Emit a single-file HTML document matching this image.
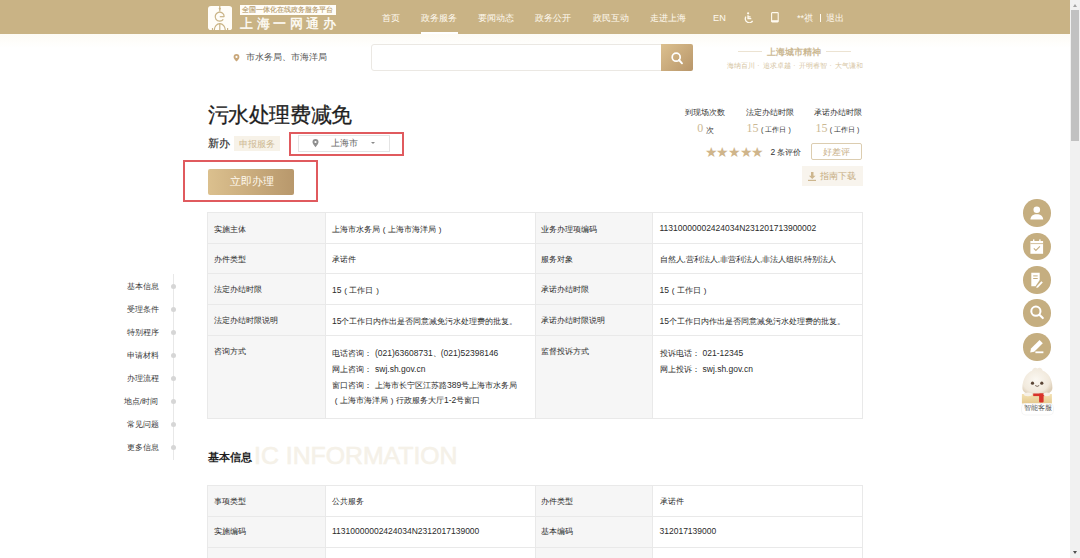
<!DOCTYPE html>
<html><head><meta charset="utf-8">
<style>
*{margin:0;padding:0;box-sizing:border-box}
html,body{width:1080px;height:558px;overflow:hidden;background:#fff}
body{font-family:"Liberation Sans",sans-serif;position:relative;color:#333}
.a{position:absolute;white-space:nowrap;line-height:1}
.r{position:absolute}
i{font-style:normal}
#hdr{position:absolute;left:0;top:0;width:1070px;height:34px;background:#c9b385}
#hsh{position:absolute;left:0;top:34px;width:1070px;height:14px;background:linear-gradient(#fdfbf5,#fff)}
.nav{color:#fffaf0;font-size:9.2px}
.t8{font-size:8px;color:#2b2b2b}
.n{font-size:8.5px}
.sp{display:inline-block;width:3px}
.fp{display:inline-block;width:8px;text-align:center;font-size:8px}
.hl{position:absolute;height:1px;background:#e9e9e9}
.vl{position:absolute;width:1px;background:#e9e9e9}
.lb{position:absolute;background:#f6f6f6}
.slg{top:62.6px;font-size:6.6px;color:#d6c5a3}
.snav{font-size:8px;color:#383838;margin-top:-0.6px}
.dot{position:absolute;left:171.2px;width:5px;height:5px;border-radius:50%;background:#d6d6d6}
.circ{position:absolute;left:1023.3px;width:27.6px;height:27.6px;border-radius:50%;background:#c5ae80}
.circ svg{position:absolute;left:0;top:0}
</style></head><body>
<div id="hdr"></div><div id="hsh"></div>
<!-- logo -->
<svg class="a" style="left:207.8px;top:5.7px" width="24.2" height="24.2" viewBox="0 0 24.2 24.2">
<rect x="0" y="0" width="24.2" height="24.2" rx="3" fill="#fffdf8"/>
<g stroke="#c9b385" stroke-width="1.2" fill="none">
<line x1="11.8" y1="0" x2="11.8" y2="5.5"/>
<path d="M16.2 10.7 A4.5 4.5 0 1 0 15.3 13.4"/>
<line x1="11.8" y1="10.7" x2="16.2" y2="10.7"/>
<path d="M6.3 24.2 A5.5 6.5 0 0 1 17.3 24.2"/>
<line x1="11.8" y1="17.5" x2="11.8" y2="24.2"/>
<line x1="4.5" y1="22" x2="4.5" y2="24.2"/>
<line x1="19.6" y1="22" x2="19.6" y2="24.2"/>
</g>
<path d="M11.8 1.3 L13.1 2.7 L11.8 4.1 L10.5 2.7Z" fill="#c9b385"/>
</svg>
<div class="r" style="left:240px;top:5px;width:96px;height:10px;background:#fffdf8"></div>
<div class="a" style="left:242px;top:5.8px;font-size:7.2px;color:#b89e70;-webkit-text-stroke:0.15px #b89e70">全国一体化在线政务服务平台</div>
<div class="a" style="left:240px;top:16.6px;font-size:13.4px;color:#fffdf8;letter-spacing:3.6px;-webkit-text-stroke:0.35px #fffdf8">上海一网通办</div>
<!-- nav -->
<div class="a nav" style="left:382px;top:13.5px">首页</div>
<div class="a nav" style="left:421px;top:13.5px">政务服务</div>
<div class="r" style="left:421px;top:32px;width:37px;height:2px;background:#fff"></div>
<div class="a nav" style="left:478px;top:13.5px">要闻动态</div>
<div class="a nav" style="left:535px;top:13.5px">政务公开</div>
<div class="a nav" style="left:592.5px;top:13.5px">政民互动</div>
<div class="a nav" style="left:650px;top:13.5px">走进上海</div>
<div class="a nav" style="left:713px;top:13.8px">EN</div>
<svg class="a" style="left:743px;top:12px" width="11" height="11" viewBox="0 0 11 11">
<g fill="none" stroke="#fffaf0" stroke-width="1.3"><circle cx="5.1" cy="1.3" r="1.1" fill="#fffaf0" stroke="none"/>
<path d="M2.9 4.6 A3.9 3.9 0 1 0 9.6 8.8"/><path d="M5 3.2 V6.6 H8.3"/><path d="M5 4.9 H7.6"/></g></svg>
<svg class="a" style="left:770.8px;top:12px" width="8" height="10.5" viewBox="0 0 8 10.5">
<rect x="0.6" y="0.6" width="6.6" height="9.3" rx="0.6" fill="none" stroke="#fffaf0" stroke-width="1.1"/>
<rect x="0.6" y="8.2" width="6.6" height="1.8" fill="#fffaf0"/></svg>
<div class="a nav" style="left:797px;top:13.5px">**祺</div>
<div class="r" style="left:820px;top:14px;width:1px;height:8px;background:#fffaf0"></div>
<div class="a nav" style="left:826px;top:13.5px">退出</div>

<!-- search row -->
<svg class="a" style="left:233px;top:53.8px" width="7" height="8" viewBox="0 0 7 8">
<path d="M3.5 7.6 C1.5 5.3 0.6 4 0.6 2.9 A2.9 2.9 0 0 1 6.4 2.9 C6.4 4 5.5 5.3 3.5 7.6Z" fill="#c9a77a"/>
<circle cx="3.5" cy="2.9" r="1.1" fill="#fff"/></svg>
<div class="a" style="left:246px;top:53px;font-size:9.2px;color:#555">市水务局、市海洋局</div>
<div class="r" style="left:371px;top:44px;width:291px;height:27.3px;border:1px solid #ebe8e3;border-radius:3px 0 0 3px;background:#fff"></div>
<div class="r" style="left:661px;top:44px;width:32px;height:27.3px;border-radius:0 2px 2px 0;background:linear-gradient(135deg,#dcc08f,#b8966a)"></div>
<svg class="a" style="left:670px;top:51px" width="14" height="14" viewBox="0 0 14 14">
<circle cx="6.2" cy="6.2" r="4" fill="none" stroke="#fff" stroke-width="1.7"/>
<line x1="9" y1="9" x2="12" y2="12.3" stroke="#fff" stroke-width="1.9" stroke-linecap="round"/></svg>
<div class="r" style="left:738px;top:51px;width:24px;height:1px;background:#ece3d2"></div>
<div class="r" style="left:826px;top:51px;width:25px;height:1px;background:#ece3d2"></div>
<div class="a" style="left:767px;top:48px;font-size:9px;color:#cbb893;font-weight:bold">上海城市精神</div>
<div class="a slg" style="left:726.7px">海纳百川</div><div class="a slg" style="left:757.2px">·</div>
<div class="a slg" style="left:763px">追求卓越</div><div class="a slg" style="left:793.3px">·</div>
<div class="a slg" style="left:799.2px">开明睿智</div><div class="a slg" style="left:829.4px">·</div>
<div class="a slg" style="left:835.3px">大气谦和</div>

<!-- title -->
<div class="a" style="left:207.7px;top:104.7px;font-size:20.6px;letter-spacing:-0.4px;-webkit-text-stroke:0.3px #1e1e1e;color:#1e1e1e">污水处理费减免</div>
<div class="a" style="left:207.7px;top:138.4px;font-size:11.4px;color:#2a2a2a;-webkit-text-stroke:0.15px #2a2a2a">新办</div>
<div class="r" style="left:233.5px;top:135.7px;width:46px;height:15.3px;background:#f7f2e8"></div>
<div class="a" style="left:238.7px;top:139.6px;font-size:9px;color:#cdb892">申报服务</div>
<div class="r" style="left:288.5px;top:131.7px;width:115px;height:24.5px;border:2px solid #e05a5e"></div>
<div class="r" style="left:297.5px;top:135.3px;width:92px;height:16.7px;border:1px solid #e4e4e4"></div>
<svg class="a" style="left:312px;top:139.4px" width="7" height="8.5" viewBox="0 0 7 8.5">
<path d="M3.5 8.3 C1.5 5.8 0.5 4.3 0.5 3 A3 3 0 0 1 6.5 3 C6.5 4.3 5.5 5.8 3.5 8.3Z" fill="#8f8f8f"/>
<circle cx="3.5" cy="3" r="1.1" fill="#fff"/></svg>
<div class="a" style="left:331.4px;top:139.4px;font-size:9px;color:#666">上海市</div>
<div class="r" style="left:370.8px;top:142.3px;width:0;height:0;border-left:2.6px solid transparent;border-right:2.6px solid transparent;border-top:2.8px solid #8a8a8a"></div>

<div class="r" style="left:183px;top:160.4px;width:135px;height:41.5px;border:2px solid #e05a5e"></div>
<div class="r" style="left:208px;top:168.5px;width:86.3px;height:26.2px;border-radius:2px;background:linear-gradient(90deg,#dbc08e,#b8986c)"></div>
<div class="a" style="left:230px;top:176.2px;font-size:10.8px;color:#fffaf0">立即办理</div>

<!-- stats -->
<div class="a t8" style="left:685.2px;top:109px;color:#333">到现场次数</div>
<div class="a t8" style="left:745.8px;top:109px;color:#333">法定办结时限</div>
<div class="a t8" style="left:814.3px;top:109px;color:#333">承诺办结时限</div>
<div class="a" style="left:697.2px;top:122.2px;font-size:12px;color:#ccb994;font-family:'Liberation Serif',serif">0</div>
<div class="a" style="left:705.5px;top:127.2px;font-size:7.5px;color:#333">次</div>
<div class="a" style="left:746.5px;top:122.2px;font-size:12px;color:#ccb994;font-family:'Liberation Serif',serif">15</div>
<div class="a" style="left:761px;top:126.4px;font-size:7px;color:#333">(</div>
<div class="a" style="left:765.2px;top:126px;font-size:7.4px;color:#333">工作日</div>
<div class="a" style="left:788.5px;top:126.4px;font-size:7px;color:#333">)</div>
<div class="a" style="left:815.5px;top:122.2px;font-size:12px;color:#ccb994;font-family:'Liberation Serif',serif">15</div>
<div class="a" style="left:829.8px;top:126.4px;font-size:7px;color:#333">(</div>
<div class="a" style="left:833.8px;top:126px;font-size:7.4px;color:#333">工作日</div>
<div class="a" style="left:857px;top:126.4px;font-size:7px;color:#333">)</div>
<div class="a" style="left:704.8px;top:145.8px;font-size:13.8px;color:#cfb58b;letter-spacing:-1.4px">★★★★★</div>
<div class="a t8" style="left:770.5px;top:147.5px;color:#333"><i class="n">2</i> 条评价</div>
<div class="r" style="left:811.4px;top:143.2px;width:51px;height:17px;border:1px solid #dccdb0;border-radius:2px"></div>
<div class="a" style="left:822.8px;top:147.8px;font-size:9.3px;color:#c8b089">好差评</div>
<div class="r" style="left:801.5px;top:166.2px;width:61.5px;height:20px;background:#f8f4ed"></div>
<svg class="a" style="left:807.8px;top:172px" width="8.5" height="9" viewBox="0 0 8.5 9">
<path d="M3 0 H5.5 V3.8 H7.6 L4.25 7 L0.9 3.8 H3Z" fill="#cdb68e"/><rect x="0" y="7.8" width="8.5" height="1.2" fill="#cdb68e"/></svg>
<div class="a" style="left:820.4px;top:171.8px;font-size:9.1px;color:#c6ad82">指南下载</div>

<!-- table 1 -->
<div class="lb" style="left:207px;top:212px;width:118px;height:206px"></div>
<div class="lb" style="left:535px;top:212px;width:117px;height:206px"></div>
<div class="hl" style="left:207px;top:212px;width:656px"></div>
<div class="hl" style="left:207px;top:243px;width:656px"></div>
<div class="hl" style="left:207px;top:273px;width:656px"></div>
<div class="hl" style="left:207px;top:304px;width:656px"></div>
<div class="hl" style="left:207px;top:335px;width:656px"></div>
<div class="hl" style="left:207px;top:418px;width:656px"></div>
<div class="vl" style="left:207px;top:212px;height:207px"></div>
<div class="vl" style="left:325px;top:212px;height:207px"></div>
<div class="vl" style="left:535px;top:212px;height:207px"></div>
<div class="vl" style="left:652px;top:212px;height:207px"></div>
<div class="vl" style="left:862px;top:212px;height:207px"></div>

<div class="a t8" style="left:214.1px;top:225.8px">实施主体</div>
<div class="a t8" style="left:332px;top:225.8px">上海市水务局<i class="fp">(</i>上海市海洋局<i class="fp">)</i></div>
<div class="a t8" style="left:541.1px;top:225.8px">业务办理项编码</div>
<div class="a t8" style="left:659.5px;top:223.8px"><i class="n">11310000002424034N231201713900002</i></div>

<div class="a t8" style="left:214.1px;top:256px">办件类型</div>
<div class="a t8" style="left:332px;top:256px">承诺件</div>
<div class="a t8" style="left:541.1px;top:256px">服务对象</div>
<div class="a t8" style="left:659.5px;top:256px">自然人,营利法人,非营利法人,非法人组织,特别法人</div>

<div class="a t8" style="left:214.1px;top:286.2px">法定办结时限</div>
<div class="a t8" style="left:332px;top:286.2px"><i class="n">15</i><i class="fp">(</i>工作日<i class="fp">)</i></div>
<div class="a t8" style="left:541.1px;top:286.2px">承诺办结时限</div>
<div class="a t8" style="left:659.5px;top:286.2px"><i class="n">15</i><i class="fp">(</i>工作日<i class="fp">)</i></div>

<div class="a t8" style="left:214.1px;top:317.4px">法定办结时限说明</div>
<div class="a t8" style="left:332px;top:317.4px"><i class="n">15</i>个工作日内作出是否同意减免污水处理费的批复。</div>
<div class="a t8" style="left:541.1px;top:317.4px">承诺办结时限说明</div>
<div class="a t8" style="left:659.5px;top:317.4px"><i class="n">15</i>个工作日内作出是否同意减免污水处理费的批复。</div>

<div class="a t8" style="left:214px;top:348px">咨询方式</div>
<div class="a t8" style="left:332px;top:349px">电话咨询：<i class="n"><i class="sp"></i>(021)63608731</i>、<i class="n">(021)52398146</i></div>
<div class="a t8" style="left:332px;top:364.8px">网上咨询：<i class="n"><i class="sp"></i>swj.sh.gov.cn</i></div>
<div class="a t8" style="left:332px;top:380.6px">窗口咨询：<i class="sp"></i>上海市长宁区江苏路<i class="n">389</i>号上海市水务局</div>
<div class="a t8" style="left:332px;top:396.4px"><i class="fp">(</i>上海市海洋局<i class="fp">)</i>行政服务大厅<i class="n">1-2</i>号窗口</div>
<div class="a t8" style="left:541px;top:348px">监督投诉方式</div>
<div class="a t8" style="left:659.5px;top:349px">投诉电话：<i class="n"><i class="sp"></i>021-12345</i></div>
<div class="a t8" style="left:659.5px;top:364.8px">网上投诉：<i class="n"><i class="sp"></i>swj.sh.gov.cn</i></div>

<!-- side nav -->
<div class="r" style="left:173.2px;top:274px;width:1px;height:186px;background:#e8e8e8"></div>
<div class="a snav" style="left:127.4px;top:283.5px">基本信息</div><div class="dot" style="top:283.6px"></div>
<div class="a snav" style="left:127.4px;top:306.6px">受理条件</div><div class="dot" style="top:306.7px"></div>
<div class="a snav" style="left:127.4px;top:329.6px">特别程序</div><div class="dot" style="top:329.8px"></div>
<div class="a snav" style="left:127.4px;top:352.7px">申请材料</div><div class="dot" style="top:352.9px"></div>
<div class="a snav" style="left:127.4px;top:375.8px">办理流程</div><div class="dot" style="top:375.9px"></div>
<div class="a snav" style="left:123.8px;top:398.8px">地点/时间</div><div class="dot" style="top:399px"></div>
<div class="a snav" style="left:127.4px;top:421.9px">常见问题</div><div class="dot" style="top:422.1px"></div>
<div class="a snav" style="left:127.4px;top:445px">更多信息</div><div class="dot" style="top:445.2px"></div>

<!-- section 2 -->
<div class="a" style="left:204.5px;top:444px;font-size:24.8px;color:#f5f1e8;-webkit-text-stroke:0.6px #f5f1e8">BASIC INFORMATION</div>
<div class="r" style="left:205px;top:444px;width:50px;height:24px;background:#fff"></div>
<div class="a" style="left:207.8px;top:452px;font-size:11.4px;font-weight:bold;color:#1e1e1e">基本信息</div>

<div class="lb" style="left:207px;top:484.5px;width:118px;height:80px"></div>
<div class="lb" style="left:535px;top:484.5px;width:117px;height:80px"></div>
<div class="hl" style="left:207px;top:484.5px;width:656px"></div>
<div class="hl" style="left:207px;top:515.5px;width:656px"></div>
<div class="hl" style="left:207px;top:546.5px;width:656px"></div>
<div class="vl" style="left:207px;top:484.5px;height:80px"></div>
<div class="vl" style="left:325px;top:484.5px;height:80px"></div>
<div class="vl" style="left:535px;top:484.5px;height:80px"></div>
<div class="vl" style="left:652px;top:484.5px;height:80px"></div>
<div class="vl" style="left:862px;top:484.5px;height:80px"></div>
<div class="a t8" style="left:214.1px;top:498.2px">事项类型</div>
<div class="a t8" style="left:332px;top:498.2px">公共服务</div>
<div class="a t8" style="left:541.1px;top:498.2px">办件类型</div>
<div class="a t8" style="left:659.5px;top:498.2px">承诺件</div>
<div class="a t8" style="left:214.1px;top:527.8px">实施编码</div>
<div class="a t8" style="left:332px;top:527px"><i class="n">11310000002424034N2312017139000</i></div>
<div class="a t8" style="left:541.1px;top:527.8px">基本编码</div>
<div class="a t8" style="left:659.5px;top:527px"><i class="n">312017139000</i></div>

<!-- floating icons -->
<div class="circ" style="top:199px"><svg width="27.6" height="27.6" viewBox="0 0 27.6 27.6">
<circle cx="13.8" cy="10.8" r="3.3" fill="#fff"/>
<path d="M7.4 20.4 C7.6 17 10.2 15.2 13.8 15.2 C17.4 15.2 20 17 20.2 20.4 Z" fill="#fff"/></svg></div>
<div class="circ" style="top:232.5px"><svg width="27.6" height="27.6" viewBox="0 0 27.6 27.6">
<rect x="7.4" y="8" width="12.7" height="12.8" fill="#fff"/>
<rect x="10" y="6.4" width="1.4" height="3" fill="#fff"/><rect x="16.2" y="6.4" width="1.4" height="3" fill="#fff"/>
<line x1="7.4" y1="10.6" x2="20.1" y2="10.6" stroke="#c5ae80" stroke-width="0.8"/>
<path d="M10.8 15.3 L12.9 17.4 L16.9 13.4" fill="none" stroke="#c5ae80" stroke-width="1.1"/></svg></div>
<div class="circ" style="top:266.1px"><svg width="27.6" height="27.6" viewBox="0 0 27.6 27.6">
<path d="M8.3 6.8 H16.7 V14 L12.5 20.2 H8.3 Z" fill="#fff"/>
<rect x="10.2" y="9.4" width="4.5" height="1" fill="#c5ae80"/><rect x="10.2" y="12" width="4.5" height="1" fill="#c5ae80"/>
<path d="M13.6 20.6 L18.4 15.3 L19.8 16.6 L15.1 21.6 L13.3 21.9Z" fill="#fff"/></svg></div>
<div class="circ" style="top:299.4px"><svg width="27.6" height="27.6" viewBox="0 0 27.6 27.6">
<circle cx="12.9" cy="12.2" r="4.6" fill="none" stroke="#fff" stroke-width="2"/>
<line x1="16.4" y1="15.7" x2="19.8" y2="19.1" stroke="#fff" stroke-width="2.1" stroke-linecap="round"/></svg></div>
<div class="circ" style="top:333.3px"><svg width="27.6" height="27.6" viewBox="0 0 27.6 27.6">
<path d="M7.2 19.4 L8 15.6 L16.6 7 L19.8 10.2 L11.2 18.8 Z" fill="#fff"/>
<rect x="12.4" y="18.4" width="8" height="1.8" fill="#fff"/></svg></div>

<!-- mascot -->
<svg class="a" style="left:1018px;top:364px" width="40" height="52" viewBox="0 0 40 52">
<defs><radialGradient id="bun" cx="45%" cy="45%" r="60%"><stop offset="0" stop-color="#fbf8f2"/><stop offset="0.75" stop-color="#f1e9dc"/><stop offset="1" stop-color="#dccdb6"/></radialGradient>
<linearGradient id="box" x1="0" y1="0" x2="0" y2="1"><stop offset="0" stop-color="#f3e2b4"/><stop offset="1" stop-color="#e5c98e"/></linearGradient></defs>
<rect x="3.9" y="30" width="30" height="9.5" fill="url(#box)"/>
<path d="M4.4 24 C4.4 15 9 8.5 14 6.8 C15 3.6 17.5 3 19.4 4.6 C21.3 3 23.8 3.6 24.8 6.8 C30 8.5 34.4 15 34.4 24 C34.4 29 28 31 19.4 31 C10.8 31 4.4 29 4.4 24Z" fill="url(#bun)"/>
<circle cx="14.5" cy="19.2" r="1.6" fill="#5a4536"/><circle cx="23.8" cy="19.2" r="1.6" fill="#5a4536"/>
<path d="M17.2 21.5 Q19.2 23.3 21.2 21.5" fill="none" stroke="#5a4536" stroke-width="0.8"/>
<rect x="15.2" y="29.5" width="11.4" height="2.6" fill="#d8332a"/>
<rect x="21.1" y="29.5" width="4.5" height="8.9" rx="1" fill="#d8332a"/>
<ellipse cx="10" cy="30.3" rx="4.2" ry="1.9" fill="#f7f1e8"/><ellipse cx="28.8" cy="30.3" rx="3.4" ry="1.9" fill="#f7f1e8"/>
<rect x="3.5" y="39.5" width="32" height="11.5" rx="4" fill="#fff" stroke="#efefef" stroke-width="0.6"/>
</svg>
<div class="a" style="left:1024.4px;top:405.3px;font-size:6.7px;color:#555">智能客服</div>

<!-- scrollbar -->
<div class="r" style="left:1070px;top:0;width:10px;height:558px;background:#f1f1f1"></div>
<div class="r" style="left:1071px;top:10px;width:8px;height:131px;background:#c1c1c1"></div>
<div class="r" style="left:1072.5px;top:4px;width:0;height:0;border-left:2.5px solid transparent;border-right:2.5px solid transparent;border-bottom:3px solid #a3a3a3"></div>
<div class="r" style="left:1072.5px;top:551px;width:0;height:0;border-left:2.5px solid transparent;border-right:2.5px solid transparent;border-top:3px solid #505050"></div>
</body></html>
